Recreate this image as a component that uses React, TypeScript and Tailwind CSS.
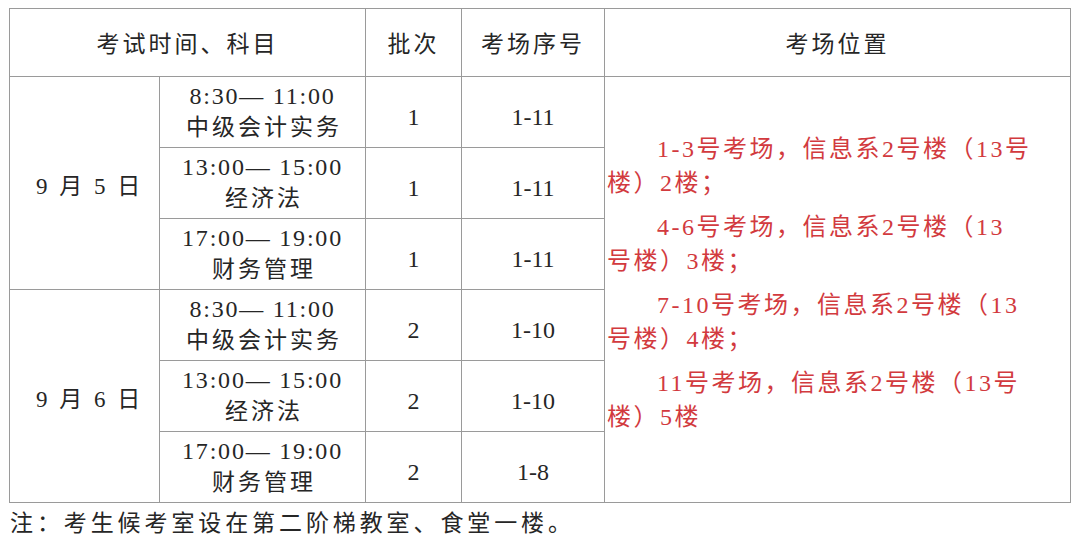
import React from 'react';

const font = "font-['Liberation_Serif','Noto_Sans_CJK_SC',serif]";

// 数字单独用衬线字体，避免被中文字体接管
const Mixed: React.FC<{ text: string }> = ({ text }) => (
  <>
    {text.split(/([0-9:\-]+)/).map((part, i) =>
      /^[0-9:\-]+$/.test(part) ? (
        <span key={i} className="font-['Liberation_Serif',serif]">{part}</span>
      ) : (
        <React.Fragment key={i}>{part}</React.Fragment>
      )
    )}
  </>
);

type Session = { time: string; subject: string; batch: string; rooms: string };

const days: { date: string; sessions: Session[] }[] = [
  {
    date: '9 月 5 日',
    sessions: [
      { time: '8:30— 11:00', subject: '中级会计实务', batch: '1', rooms: '1-11' },
      { time: '13:00— 15:00', subject: '经济法', batch: '1', rooms: '1-11' },
      { time: '17:00— 19:00', subject: '财务管理', batch: '1', rooms: '1-11' },
    ],
  },
  {
    date: '9 月 6 日',
    sessions: [
      { time: '8:30— 11:00', subject: '中级会计实务', batch: '2', rooms: '1-10' },
      { time: '13:00— 15:00', subject: '经济法', batch: '2', rooms: '1-10' },
      { time: '17:00— 19:00', subject: '财务管理', batch: '2', rooms: '1-8' },
    ],
  },
];

// 考场位置，按原图手动断行
const locations: [string, string][] = [
  ['1-3号考场，信息系2号楼（13号', '楼）2楼；'],
  ['4-6号考场，信息系2号楼（13', '号楼）3楼；'],
  ['7-10号考场，信息系2号楼（13', '号楼）4楼；'],
  ['11号考场，信息系2号楼（13号', '楼）5楼'],
];

const cell = 'border border-[#9a9a9a] text-center align-middle p-0';

const App: React.FC = () => {
  return (
    <div className={`w-[1080px] h-[541px] bg-white text-[#262626] ${font}`}>
      <div className="pl-[9px] pt-[8px]">
        <table className="border-collapse table-fixed w-[1061px]">
          <colgroup>
            <col className="w-[150px]" />
            <col className="w-[206px]" />
            <col className="w-[96px]" />
            <col className="w-[143px]" />
            <col className="w-[466px]" />
          </colgroup>
          <thead>
            <tr className="h-[68px] text-[23px] tracking-[3px]">
              <th colSpan={2} className={`${cell} font-normal pt-[6px]`}>考试时间、科目</th>
              <th className={`${cell} font-normal pt-[6px]`}>批次</th>
              <th className={`${cell} font-normal pt-[6px]`}>考场序号</th>
              <th className={`${cell} font-normal pt-[6px]`}>考场位置</th>
            </tr>
          </thead>
          <tbody>
            {days.map((day, di) =>
              day.sessions.map((s, si) => (
                <tr key={`${di}-${si}`} className="h-[71px]">
                  {si === 0 && (
                    <td rowSpan={3} className={`${cell} text-[23px] tracking-[3px] pl-[10px] pt-[8px]`}>
                      <Mixed text={day.date} />
                    </td>
                  )}
                  <td className={`${cell} leading-[31px]`}>
                    <div className="text-[24px] tracking-[1.8px]">{s.time}</div>
                    <div className="text-[23px] tracking-[3px] pl-[3px]">{s.subject}</div>
                  </td>
                  <td className={`${cell} text-[24px] pt-[10px]`}>{s.batch}</td>
                  <td className={`${cell} text-[24px] pt-[10px]`}>{s.rooms}</td>
                  {di === 0 && si === 0 && (
                    <td rowSpan={6} className={`${cell} text-left text-[#d23a3e] pb-[14px]`}>
                      <div className="flex flex-col gap-[10px] pl-[2px]">
                        {locations.map(([a, b], i) => (
                          <p key={i} className="text-[24px] leading-[34px] tracking-[2.5px] whitespace-nowrap">
                            <span className="pl-[50px]"><Mixed text={a} /></span>
                            <br />
                            <span><Mixed text={b} /></span>
                          </p>
                        ))}
                      </div>
                    </td>
                  )}
                </tr>
              ))
            )}
          </tbody>
        </table>
        <p className="text-[23px] tracking-[3.9px] leading-[38px] pl-[1px] pt-[2px]">
          注：考生候考室设在第二阶梯教室、食堂一楼。
        </p>
      </div>
    </div>
  );
};

export default App;
